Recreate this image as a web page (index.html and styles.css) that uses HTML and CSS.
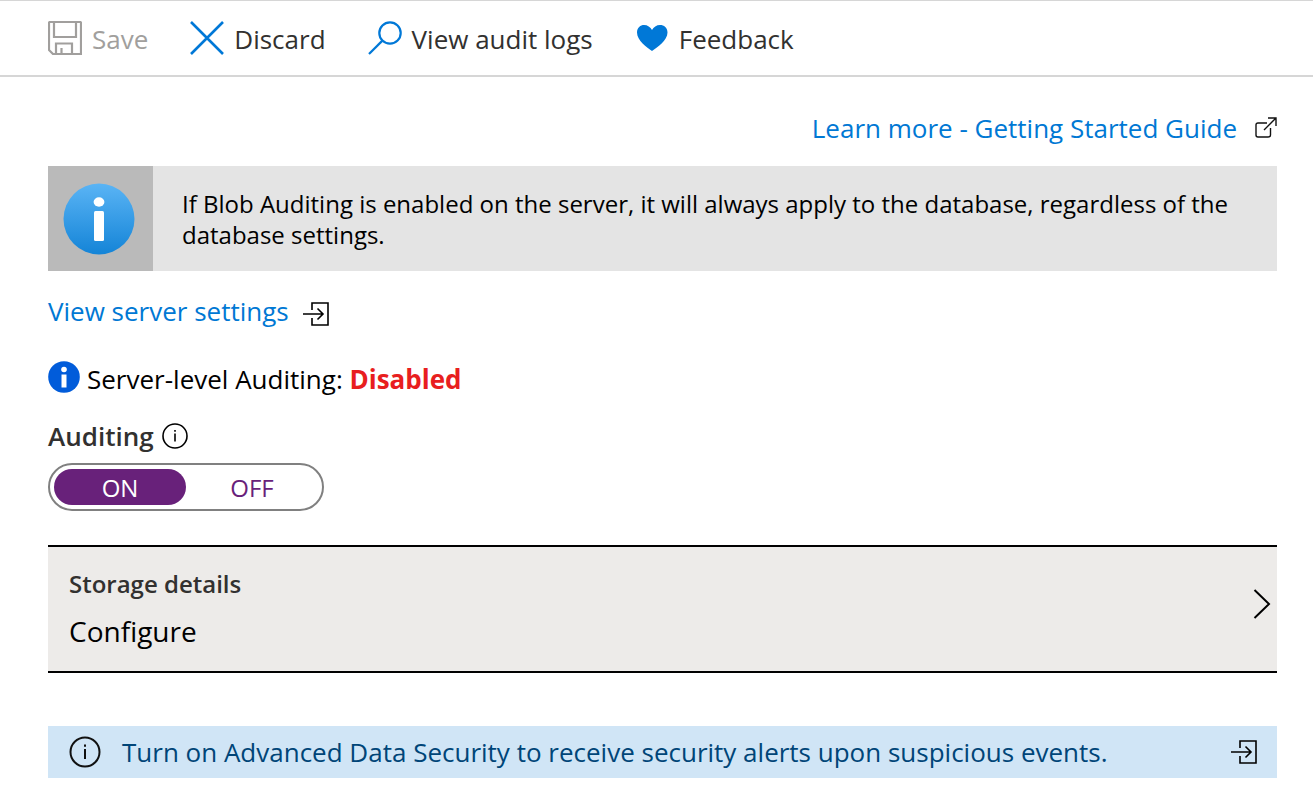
FILE: index.html
```html
<!DOCTYPE html>
<html lang="en">
<head>
<meta charset="utf-8">
<meta name="viewport" content="width=device-width, initial-scale=1">
<title>Auditing</title>
<link rel="stylesheet" href="styles.css">
</head>
<body>
<header class="toolbar">
  <button class="command" type="button" disabled>
    <svg class="command-icon" viewBox="0 0 34 34" aria-hidden="true"><path fill="none" stroke="#a19f9d" stroke-width="2.2" d="M2 1H32Q33 1 33 2V33H5L1 29V2Q1 1 2 1M6 1V16H28V1M8 33V22.500H24V33M13.500 33V27"/></svg>
    <span class="command-text">Save</span>
  </button>
  <button class="command" type="button">
    <svg class="command-icon" viewBox="0 0 34 34" aria-hidden="true"><path fill="none" stroke="#0078d7" stroke-width="2.6" d="M1 1L33 33M33 1L1 33"/></svg>
    <span class="command-text">Discard</span>
  </button>
  <button class="command" type="button">
    <svg class="command-icon" viewBox="0 0 34 34" aria-hidden="true"><g fill="none" stroke="#0078d7" stroke-width="2.2"><circle cx="22" cy="12" r="10.7"/><path d="M14.4 19.6L1 33"/></g></svg>
    <span class="command-text">View audit logs</span>
  </button>
  <button class="command" type="button">
    <svg class="command-icon" viewBox="0 0 34 34" aria-hidden="true"><path fill="#0078d7" d="M17 30C12 26.500 2 19.500 2 11.500C2 6.500 5.500 4 9 4C12.500 4 15.500 6 17 9C18.500 6 21.500 4 25 4C29 4 32.500 6.500 32.500 11.500C32.500 19.500 22 26.500 17 30"/></svg>
    <span class="command-text">Feedback</span>
  </button>
</header>
<main class="content">
  <a class="link learn-more" href="#guide">
    <span>Learn more - Getting Started Guide</span>
    <svg class="external-icon" viewBox="0 0 22 22" aria-hidden="true"><path fill="none" stroke="#111" stroke-width="1.400" d="M12 6H3Q1 6 1 8V18Q1 20 3 20H13Q15.500 20 15.500 18V11M9 13L21 1M13 1H21V9"/></svg>
  </a>
  <section class="notice">
    <div class="notice-badge">
      <svg class="notice-icon" viewBox="0 0 72 72" aria-hidden="true"><defs><linearGradient id="badge-blue" x2="0" y2="1"><stop stop-color="#5ab4f5"/><stop offset="1" stop-color="#1484d7"/></linearGradient></defs><circle cx="36" cy="36" r="35.500" fill="url(#badge-blue)"/><ellipse cx="36" cy="19" rx="5.400" ry="4.700" fill="#fff"/><rect x="31" y="28" width="10" height="30" rx="1.500" fill="#fff"/></svg>
    </div>
    <p class="notice-text">If Blob Auditing is enabled on the server, it will always apply to the database, regardless of the database settings.</p>
  </section>
  <a class="link server-link" href="#server">
    <span>View server settings</span>
    <svg class="enter-icon" viewBox="0 0 26 26" aria-hidden="true"><path fill="none" stroke="#000" stroke-width="1.600" d="M9 9V2H25V24H9V17M0 13H20M14.500 7.500L20 13L14.500 18.500"/></svg>
  </a>
  <p class="status">
    <svg class="status-icon" viewBox="0 0 32 32" aria-hidden="true"><circle cx="16" cy="16" r="15.800" fill="#015cda"/><circle cx="16" cy="8.500" r="2.800" fill="#fff"/><path fill="#fff" d="M13.500 13.500H18.500V26.500H13.500Z"/></svg>
    <span>Server-level Auditing: <strong class="status-value">Disabled</strong></span>
  </p>
  <fieldset class="auditing">
    <legend class="auditing-label">
      <span>Auditing</span>
      <svg class="hint-icon" viewBox="0 0 26 26" aria-hidden="true"><circle cx="13" cy="13" r="12" fill="none" stroke="#000" stroke-width="1.600"/><path fill="#000" d="M12.200 10.500H13.800V18.500H12.200ZM12.200 7H13.800V8.800H12.200Z"/></svg>
    </legend>
    <div class="switch">
      <label class="switch-option"><input class="switch-input" type="radio" name="auditing" checked><span class="switch-text">ON</span></label>
      <label class="switch-option"><input class="switch-input" type="radio" name="auditing"><span class="switch-text">OFF</span></label>
    </div>
  </fieldset>
  <button class="storage" type="button">
    <span class="storage-copy"><span class="storage-title">Storage details</span><span class="storage-value">Configure</span></span>
    <svg class="chevron" viewBox="0 0 18 30" aria-hidden="true"><path fill="none" stroke="#000" stroke-width="2" d="M1.500 1L16 15L1.500 29"/></svg>
  </button>
  <a class="security" href="#security">
    <svg class="security-icon" viewBox="0 0 32 32" aria-hidden="true"><circle cx="16" cy="16" r="14.500" fill="none" stroke="#111" stroke-width="2"/><path fill="#111" d="M15 13H17V23H15ZM15 8.500H17V10.800H15Z"/></svg>
    <span class="security-text">Turn on Advanced Data Security to receive security alerts upon suspicious events.</span>
    <svg class="enter-icon" viewBox="0 0 26 26" aria-hidden="true"><path fill="none" stroke="#000" stroke-width="1.600" d="M9 9V2H25V24H9V17M0 13H20M14.500 7.500L20 13L14.500 18.500"/></svg>
  </a>
</main>
</body>
</html>
```
FILE: styles.css
```css
* { box-sizing: border-box; }
body {
  margin: 0;
  background: #fff;
  color: #000;
  font: 26px/32px "Open Sans", "Noto Sans", sans-serif;
}
button { font: inherit; text-align: left; cursor: pointer; }
svg { display: block; flex: none; }
p { margin: 0; }

.toolbar {
  display: flex;
  flex-wrap: wrap;
  gap: 0 42px;
  padding: 18px 48px;
  border-top: 1px solid #d6d6d6;
  border-bottom: 2px solid #d6d6d6;
}
.command {
  display: flex;
  align-items: center;
  gap: 10px;
  padding: 0;
  border: 0;
  background: none;
  color: #323130;
}
.command:disabled { color: #a19f9d; cursor: default; }
.command-icon { width: 34px; height: 34px; }
.command-text { padding: 4px 0 2px; }

.content {
  display: flex;
  flex-direction: column;
  align-items: stretch;
  padding: 35px 36px 28px 48px;
}
.link {
  display: flex;
  align-items: center;
  gap: 18px;
  color: #0078d4;
  text-decoration: none;
}
.learn-more { align-self: flex-end; }
.external-icon { width: 22px; height: 22px; }
.enter-icon { width: 26px; height: 26px; }

.notice {
  display: flex;
  margin-top: 22px;
  background: #e4e4e4;
}
.notice-badge {
  display: flex;
  align-items: center;
  padding: 0 18px 0 15px;
  background: #bababa;
}
.notice-icon { width: 72px; height: 72px; }
.notice-text {
  padding: 22px 29px 21px;
  font-size: 24px;
  line-height: 31px;
}
.server-link {
  align-self: flex-start;
  align-items: flex-end;
  gap: 14px;
  margin-top: 24px;
}

.status {
  display: flex;
  align-items: center;
  gap: 7px;
  margin-top: 34px;
}
.status-icon { width: 32px; height: 32px; margin-bottom: 4px; }
.status-value { color: #e81e20; font-weight: 700; }

.auditing { margin: 23px 0 0; padding: 0; border: 0; }
.auditing-label {
  display: flex;
  align-items: center;
  gap: 8px;
  padding: 0;
  color: #323130;
  font-weight: 600;
}
.hint-icon { width: 26px; height: 26px; }
.switch {
  display: inline-flex;
  vertical-align: top;
  margin-top: 11px;
  padding: 4px;
  border: 2px solid #808080;
  border-radius: 24px;
}
.switch-option { position: relative; width: 132px; cursor: pointer; }
.switch-input { position: absolute; inset: 0; margin: 0; opacity: 0; }
.switch-text {
  display: block;
  padding-top: 2px;
  border-radius: 18px;
  color: #68217a;
  font-size: 24px;
  line-height: 34px;
  text-align: center;
}
.switch-input:checked + .switch-text { background: #68217a; color: #fff; }

.storage {
  display: flex;
  align-items: center;
  justify-content: space-between;
  margin-top: 34px;
  padding: 21px 6px 20px 21px;
  border: 0 solid #000;
  border-width: 2px 0;
  background: #edebe9;
  color: #000;
}
.storage-copy { display: flex; flex-direction: column; gap: 11px; }
.storage-title { color: #323130; font-size: 24px; font-weight: 600; }
.storage-value { font-size: 28px; line-height: 40px; }
.chevron { width: 18px; height: 30px; margin-bottom: 12px; }

.security {
  display: flex;
  align-items: center;
  gap: 21px;
  margin-top: 53px;
  padding: 10px 20px 10px 21px;
  background: #d0e5f6;
  color: #004578;
  text-decoration: none;
}
.security-icon { width: 32px; height: 32px; }
.security-text { flex: 1; }
```
